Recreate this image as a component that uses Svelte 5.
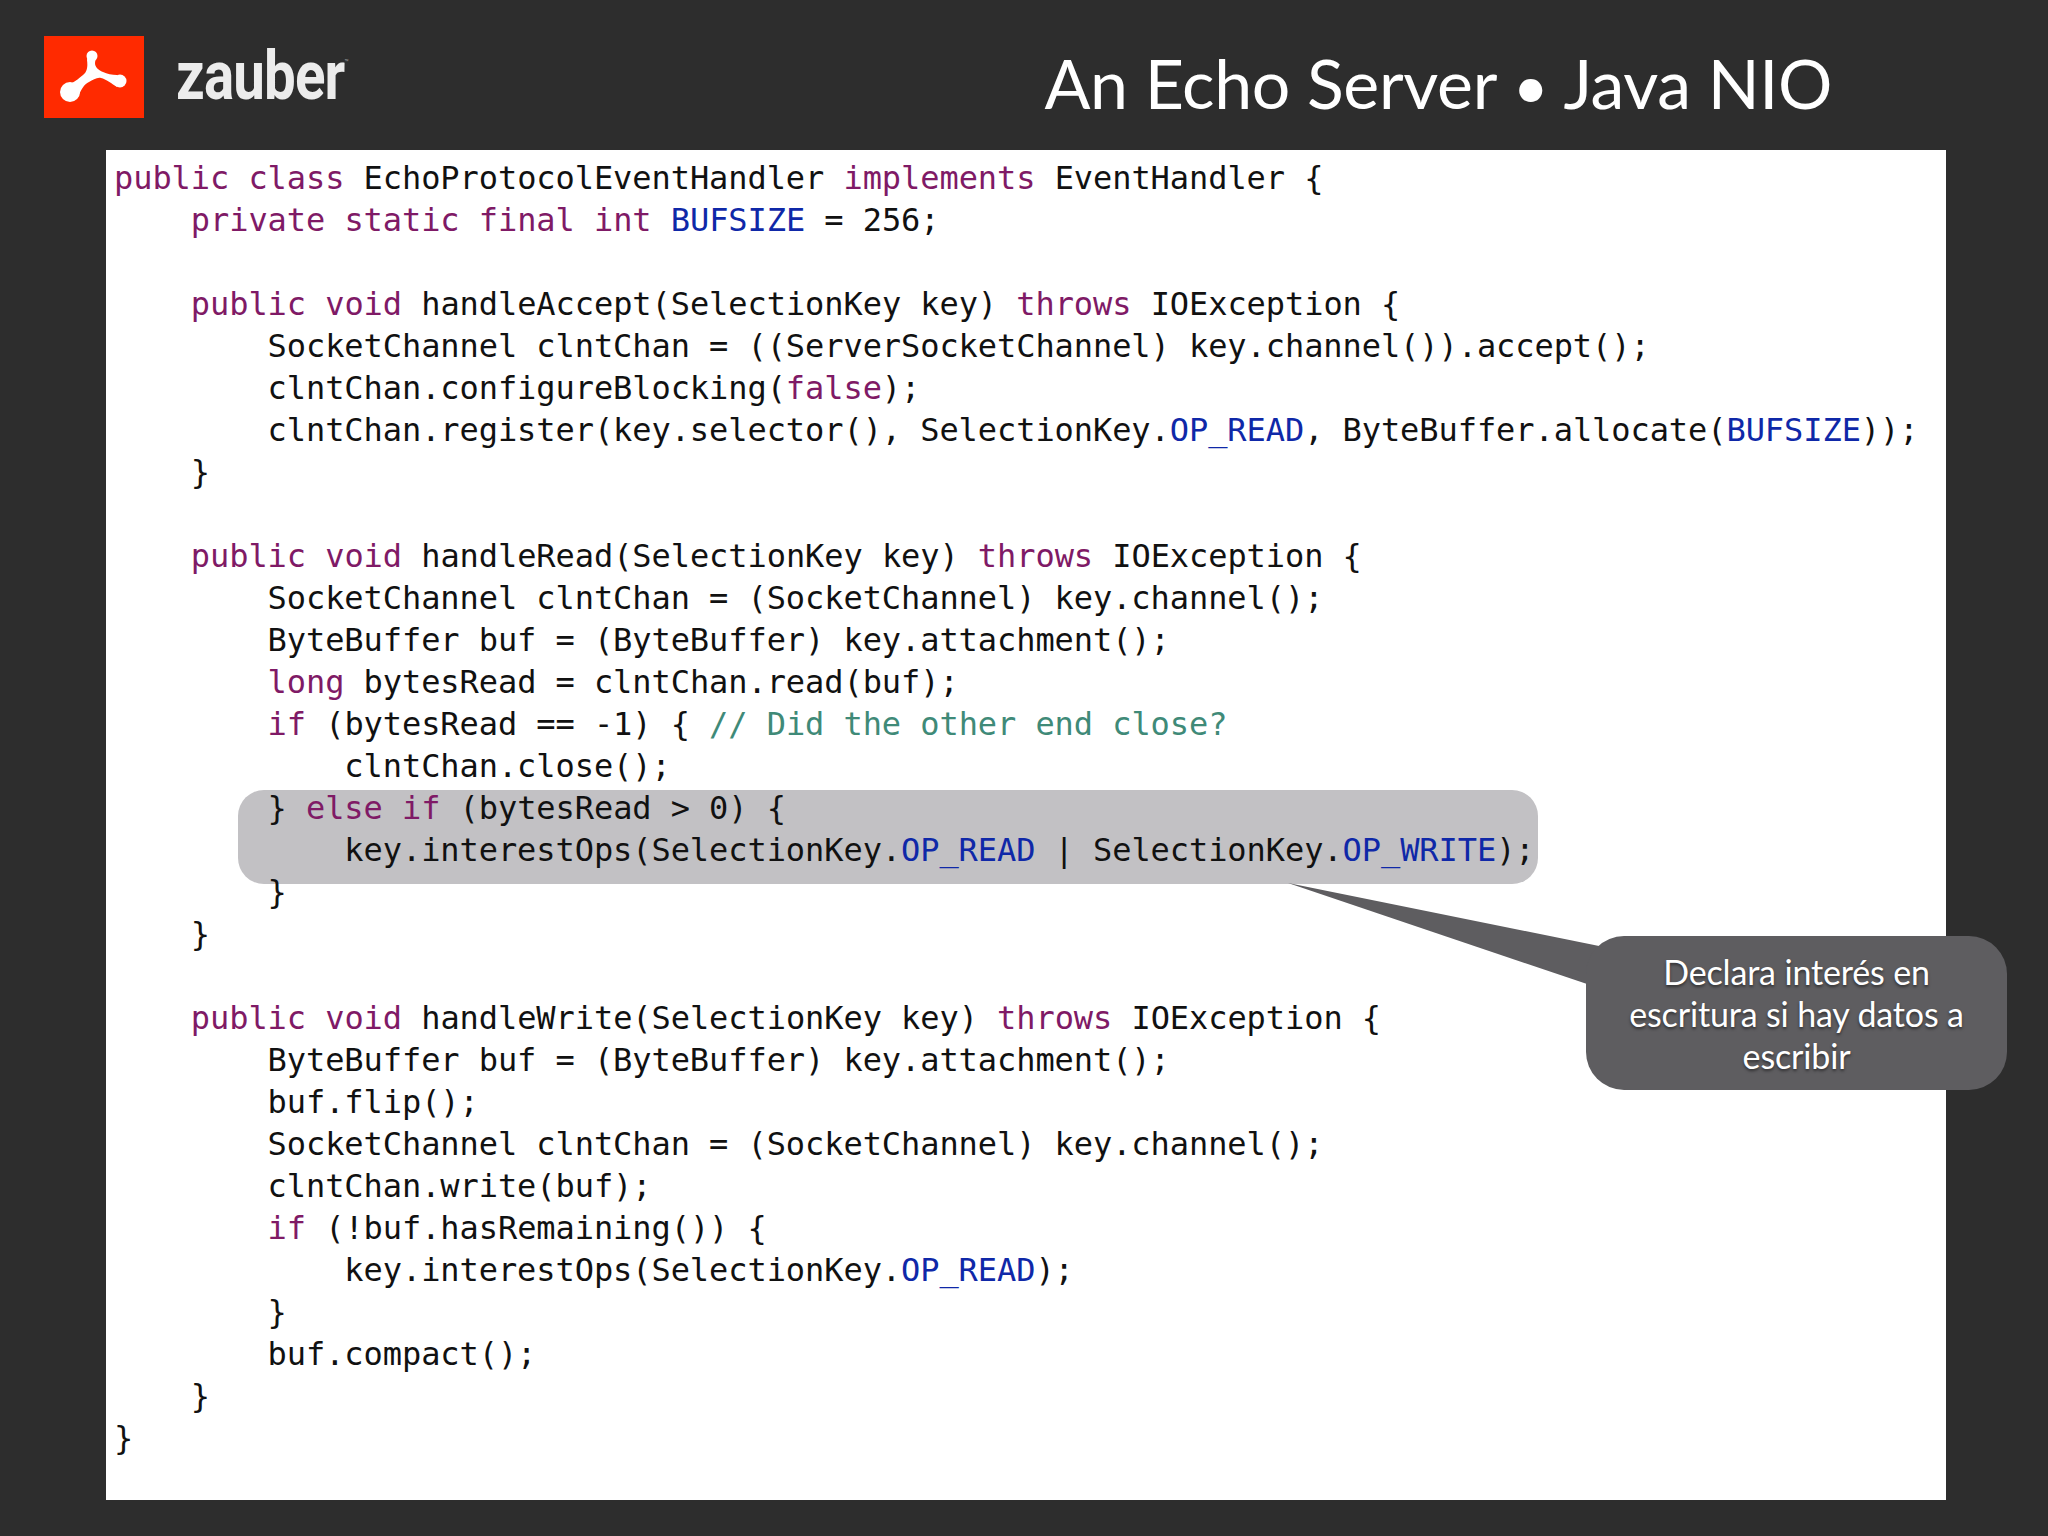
<script>
  const source = `public class EchoProtocolEventHandler implements EventHandler {
    private static final int BUFSIZE = 256;

    public void handleAccept(SelectionKey key) throws IOException {
        SocketChannel clntChan = ((ServerSocketChannel) key.channel()).accept();
        clntChan.configureBlocking(false);
        clntChan.register(key.selector(), SelectionKey.OP_READ, ByteBuffer.allocate(BUFSIZE));
    }

    public void handleRead(SelectionKey key) throws IOException {
        SocketChannel clntChan = (SocketChannel) key.channel();
        ByteBuffer buf = (ByteBuffer) key.attachment();
        long bytesRead = clntChan.read(buf);
        if (bytesRead == -1) { // Did the other end close?
            clntChan.close();
        } else if (bytesRead > 0) {
            key.interestOps(SelectionKey.OP_READ | SelectionKey.OP_WRITE);
        }
    }

    public void handleWrite(SelectionKey key) throws IOException {
        ByteBuffer buf = (ByteBuffer) key.attachment();
        buf.flip();
        SocketChannel clntChan = (SocketChannel) key.channel();
        clntChan.write(buf);
        if (!buf.hasRemaining()) {
            key.interestOps(SelectionKey.OP_READ);
        }
        buf.compact();
    }
}`;

  const pattern =
    /(\/\/.*$)|\b(public|class|implements|private|static|final|int|void|throws|false|long|if|else)\b|\b(BUFSIZE|OP_READ|OP_WRITE)\b/;

  const tokenize = (line) => {
    const tokens = [];
    let rest = line;
    while (rest) {
      const m = rest.match(pattern);
      if (!m) {
        tokens.push({ text: rest, kind: "plain" });
        break;
      }
      if (m.index) tokens.push({ text: rest.slice(0, m.index), kind: "plain" });
      tokens.push({ text: m[0], kind: m[1] ? "comment" : m[2] ? "keyword" : "constant" });
      rest = rest.slice(m.index + m[0].length);
    }
    return tokens;
  };

  const lines = source.split("\n").map(tokenize);
</script>

<div class="slide">
  <header>
    <div class="logo">
      <div class="mark">
        <svg viewBox="0 0 100 82" width="100" height="82">
          <path
            d="M43 24 C44 31 43 36 39 39 C35 42 32 45 28 47 L34 61 C37 54 40 48 45 46 C49 44 53 41 57 42 C62 43 68 48 73 51 L73 39 C68 39 63 38 59 36 C54 34 51 31 51 27 L52 19 L44 18 Z"
          />
          <circle cx="26" cy="56" r="10" />
          <circle cx="48" cy="20" r="5.5" />
          <circle cx="76" cy="45" r="6.5" />
        </svg>
      </div>
      <span class="wordmark">zauber<sup>™</sup></span>
    </div>
    <h1>An Echo Server <span class="dot">•</span> Java NIO</h1>
  </header>

  <main class="panel">
    <pre>{#each lines as tokens}<div class="line">{#each tokens as t}<span class={t.kind}>{t.text}</span>{/each}{" "}</div>{/each}</pre>
    <div class="highlight"></div>
  </main>

  <svg class="tail" viewBox="0 0 2048 1536" width="2048" height="1536">
    <polygon points="1288,883 1604,947 1590,985" />
  </svg>
  <div class="bubble">Declara interés en escritura si hay datos a escribir</div>
</div>

<style>
  :global(body) {
    margin: 0;
    background: #2d2d2d;
  }

  .slide {
    position: relative;
    width: 2048px;
    height: 1536px;
    background: #2d2d2d;
    overflow: hidden;
  }

  header {
    height: 150px;
    display: flex;
    align-items: flex-start;
    justify-content: space-between;
    padding: 0 216px 0 44px;
    box-sizing: border-box;
  }

  .logo {
    display: flex;
    align-items: flex-start;
    gap: 32px;
    padding-top: 36px;
  }

  .mark {
    width: 100px;
    height: 82px;
    background: #ff2a00;
  }

  .mark svg {
    display: block;
    fill: #fff;
  }

  .wordmark {
    display: inline-block;
    margin-top: 2px;
    transform: scaleX(0.83);
    transform-origin: left top;
    font-family: "Roboto", sans-serif;
    font-weight: 700;
    font-size: 68px;
    line-height: 76px;
    letter-spacing: -1px;
    color: #ececec;
    white-space: nowrap;
  }

  .wordmark sup {
    font-size: 8px;
    vertical-align: 34px;
    line-height: 0;
    letter-spacing: 0;
    font-weight: 400;
    color: #999;
  }

  h1 {
    margin: 41px 0 0;
    font-family: "Lato", sans-serif;
    font-weight: 400;
    font-size: 68px;
    line-height: 84px;
    letter-spacing: -0.35px;
    color: #fff;
    white-space: nowrap;
  }

  .dot {
    font-size: 62px;
  }

  .panel {
    position: relative;
    margin-left: 106px;
    width: 1840px;
    height: 1350px;
    background: #fff;
  }

  pre {
    position: relative;
    z-index: 1;
    margin: 0;
    padding: 7px 0 0 8px;
    font-family: "DejaVu Sans Mono", monospace;
    font-size: 32px;
    line-height: 42px;
    letter-spacing: -0.07px;
    color: #111;
  }

  .line {
    height: 42px;
  }

  .keyword {
    color: #7f1a66;
  }

  .constant {
    color: #0f28a8;
  }

  .comment {
    color: #3f8a78;
  }

  .highlight {
    position: absolute;
    left: 132px;
    top: 640px;
    width: 1300px;
    height: 94px;
    border-radius: 26px;
    background: #c2c1c4;
  }

  .tail {
    position: absolute;
    left: 0;
    top: 0;
    pointer-events: none;
  }

  .tail polygon {
    fill: #5e5d60;
  }

  .bubble {
    position: absolute;
    left: 1586px;
    top: 936px;
    width: 421px;
    height: 154px;
    box-sizing: border-box;
    padding: 15px 36px 0;
    border-radius: 38px;
    background: #5e5d60;
    color: #fff;
    font-family: "Lato", sans-serif;
    font-size: 34px;
    line-height: 42px;
    letter-spacing: -0.15px;
    text-align: center;
    text-shadow: 0 2px 3px rgba(0, 0, 0, 0.5);
  }
</style>
